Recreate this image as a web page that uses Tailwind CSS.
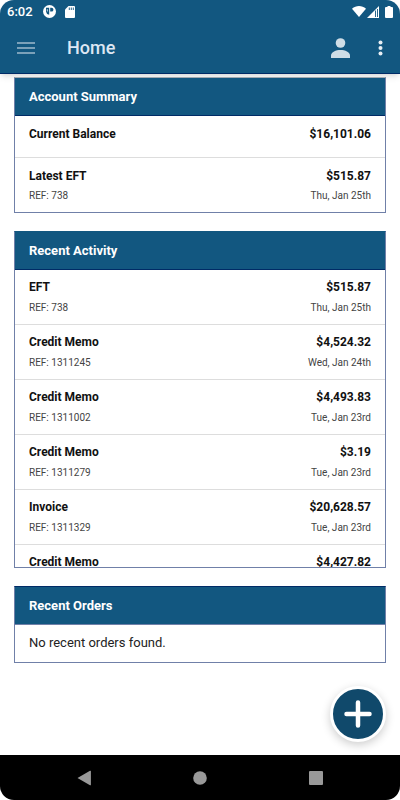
<!DOCTYPE html>
<html lang="en">

<head>
  <meta charset="UTF-8" />
  <meta name="viewport" content="width=device-width, initial-scale=1.0" />
  <title>Home</title>
  <script src="https://cdn.jsdelivr.net/npm/@tailwindcss/browser@4"></script>
</head>

<body class="bg-white font-[Roboto,sans-serif] text-[#111111]">
  <div class="relative flex flex-col min-h-screen">

    <!-- Header -->
    <header class="bg-[#125780] rounded-t-[14px] border-b border-[#002b66] shadow-md">
      <!-- Status Bar -->
      <div class="flex justify-between items-center h-6 pb-px px-[7px] text-white">
        <div class="flex items-center">
          <span class="text-[13px] leading-4 font-medium w-9">6:02</span>
          <svg class="w-[13px] h-[13px]" viewBox="0 0 13 13">
            <circle cx="6.5" cy="6.5" r="6.5" fill="#fff" />
            <path d="M3 2.8H6.2V9.8A3.8 3.8 0 0 1 3 6.5Z" fill="#125780" />
            <path d="M7.2 2.8H8.5A1.9 1.9 0 0 1 8.5 6.6H7.2Z" fill="#125780" />
            <path d="M4.3 4.2V6.5" stroke="#fff" stroke-width=".8" />
          </svg>
          <svg class="w-[10px] h-3 ml-[9px]" viewBox="0 0 10 12">
            <path d="M3.5 0H9a1 1 0 0 1 1 1V11a1 1 0 0 1-1 1H1a1 1 0 0 1-1-1V3.5Z" fill="#fff" />
            <path d="M4.3 1.5V4M6.3 1.5V4M8.3 1.5V4" stroke="#125780" stroke-width=".9" />
          </svg>
        </div>
        <div class="flex items-center">
          <svg class="w-[14px] h-[11px]" viewBox="0 0 14 11">
            <path d="M7 11L0 2.8C4-.9 10-.9 14 2.8Z" fill="#fff" />
          </svg>
          <svg class="w-3 h-3 ml-px" viewBox="0 0 12 12">
            <path d="M0 12L12 0V12Z" fill="#fff" />
            <path d="M8.5 4.5V11M10.5 3V11" stroke="#125780" stroke-width=".9" />
          </svg>
          <svg class="w-2 h-3 ml-[6px]" viewBox="0 0 8 12">
            <path d="M2.5 0h3v1H7a1 1 0 0 1 1 1v9a1 1 0 0 1-1 1H1a1 1 0 0 1-1-1V2a1 1 0 0 1 1-1h1.5Z" fill="#fff" />
          </svg>
        </div>
      </div>

      <!-- Toolbar -->
      <div class="flex items-center h-[49px] pb-px px-[17px]">
        <button aria-label="Menu">
          <svg class="w-[18px] h-3" viewBox="0 0 18 12">
            <path d="M0 1H18M0 6H18M0 11H18" stroke="#9fbacb" stroke-width="1.5" />
          </svg>
        </button>
        <h1 class="ml-8 text-[18px] leading-6 font-medium text-[#dde7f3]">Home</h1>
        <button class="ml-auto" aria-label="Account">
          <svg class="w-[19px] h-5" viewBox="0 0 19 20">
            <circle cx="9.5" cy="5" r="4.8" fill="#cfdde6" />
            <path d="M0 20V17.5C0 14 5 12 9.500 12S19 14 19 17.500V20Z" fill="#cfdde6" />
          </svg>
        </button>
        <button class="ml-7" aria-label="More options">
          <svg class="w-[5px] h-4" viewBox="0 0 5 16">
            <circle cx="2.5" cy="2.5" r="2" fill="#e8eff4" />
            <circle cx="2.5" cy="8" r="2" fill="#e8eff4" />
            <circle cx="2.5" cy="13.5" r="2" fill="#e8eff4" />
          </svg>
        </button>
      </div>
    </header>

    <main class="flex-1 flex flex-col gap-[18px] px-[14px] pt-[3px]">
      <!-- Account Summary -->
      <section class="border border-[#7080a8] border-t-[#a3abb3]">
        <h2 class="bg-[#125780] border-b border-[#002b66] px-[14px] py-[10px] text-[13px] leading-[17px] font-bold text-white">Account Summary</h2>
        <ul>
          <li class="flex justify-between px-[14px] pt-[10px] pb-[15px] border-b border-[#dddddd] text-[12px] leading-4 font-bold">
            <span>Current Balance</span><span>$16,101.06</span>
          </li>
          <li class="px-[14px] pt-[10px] pb-2">
            <div class="flex justify-between text-[12px] leading-4 font-bold"><span>Latest EFT</span><span>$515.87</span></div>
            <div class="flex justify-between mt-1 text-[10px] leading-4 text-[#444444]"><span>REF: 738</span><span>Thu, Jan 25th</span></div>
          </li>
        </ul>
      </section>

      <!-- Recent Activity -->
      <section class="flex flex-col h-[337px] border border-[#7080a8] border-t-[#125780]">
        <h2 class="bg-[#125780] border-b border-[#002b66] px-[14px] py-[10px] text-[13px] leading-[17px] font-bold text-white">Recent Activity</h2>
        <ul class="flex-1 overflow-y-auto [scrollbar-width:none]">
          <li class="px-[14px] pt-[9px] pb-2 border-b border-[#dddddd]">
            <div class="flex justify-between text-[12px] leading-4 font-bold"><span>EFT</span><span>$515.87</span></div>
            <div class="flex justify-between mt-[5px] text-[10px] leading-4 text-[#444444]"><span>REF: 738</span><span>Thu, Jan 25th</span></div>
          </li>
          <li class="px-[14px] pt-[9px] pb-2 border-b border-[#dddddd]">
            <div class="flex justify-between text-[12px] leading-4 font-bold"><span>Credit Memo</span><span>$4,524.32</span></div>
            <div class="flex justify-between mt-[5px] text-[10px] leading-4 text-[#444444]"><span>REF: 1311245</span><span>Wed, Jan 24th</span></div>
          </li>
          <li class="px-[14px] pt-[9px] pb-2 border-b border-[#dddddd]">
            <div class="flex justify-between text-[12px] leading-4 font-bold"><span>Credit Memo</span><span>$4,493.83</span></div>
            <div class="flex justify-between mt-[5px] text-[10px] leading-4 text-[#444444]"><span>REF: 1311002</span><span>Tue, Jan 23rd</span></div>
          </li>
          <li class="px-[14px] pt-[9px] pb-2 border-b border-[#dddddd]">
            <div class="flex justify-between text-[12px] leading-4 font-bold"><span>Credit Memo</span><span>$3.19</span></div>
            <div class="flex justify-between mt-[5px] text-[10px] leading-4 text-[#444444]"><span>REF: 1311279</span><span>Tue, Jan 23rd</span></div>
          </li>
          <li class="px-[14px] pt-[9px] pb-2 border-b border-[#dddddd]">
            <div class="flex justify-between text-[12px] leading-4 font-bold"><span>Invoice</span><span>$20,628.57</span></div>
            <div class="flex justify-between mt-[5px] text-[10px] leading-4 text-[#444444]"><span>REF: 1311329</span><span>Tue, Jan 23rd</span></div>
          </li>
          <li class="px-[14px] pt-[9px] pb-2">
            <div class="flex justify-between text-[12px] leading-4 font-bold"><span>Credit Memo</span><span>$4,427.82</span></div>
          </li>
        </ul>
      </section>

      <!-- Recent Orders -->
      <section class="border border-[#7080a8] border-t-[#002b66]">
        <h2 class="bg-[#125780] border-b border-[#7080a8] px-[14px] py-[10px] text-[13px] leading-[17px] font-bold text-white">Recent Orders</h2>
        <p class="px-[14px] pt-2 pb-[9px] text-[13px] leading-5 text-[#222222]">No recent orders found.</p>
      </section>
    </main>

    <!-- Add Button -->
    <button class="absolute right-[14px] bottom-[58px] flex items-center justify-center size-14 rounded-full border-3 border-white bg-[#10496b] shadow-[0_3px_10px_rgba(0,0,0,0.2)]" aria-label="Add">
      <svg class="size-7" viewBox="0 0 28 28">
        <path d="M14 2.5V25.5M2.5 14H25.5" stroke="#fff" stroke-width="4.5" stroke-linecap="round" />
      </svg>
    </button>

    <!-- Navigation Bar -->
    <nav class="flex justify-center items-center gap-[102px] h-[45px] bg-black rounded-b-[14px]">
      <button aria-label="Back">
        <svg class="w-[14px] h-4" viewBox="0 0 14 16">
          <path d="M.5 8L13 .8a.6.6 0 0 1 .9.5V14.7a.6.6 0 0 1-.9.5Z" fill="#999" />
        </svg>
      </button>
      <button aria-label="Home">
        <svg class="size-[14px]" viewBox="0 0 14 14">
          <circle cx="7" cy="7" r="6.8" fill="#999" />
        </svg>
      </button>
      <button aria-label="Recent apps">
        <svg class="size-[14px]" viewBox="0 0 14 14">
          <rect width="14" height="14" rx="1" fill="#999" />
        </svg>
      </button>
    </nav>
  </div>
</body>

</html>
